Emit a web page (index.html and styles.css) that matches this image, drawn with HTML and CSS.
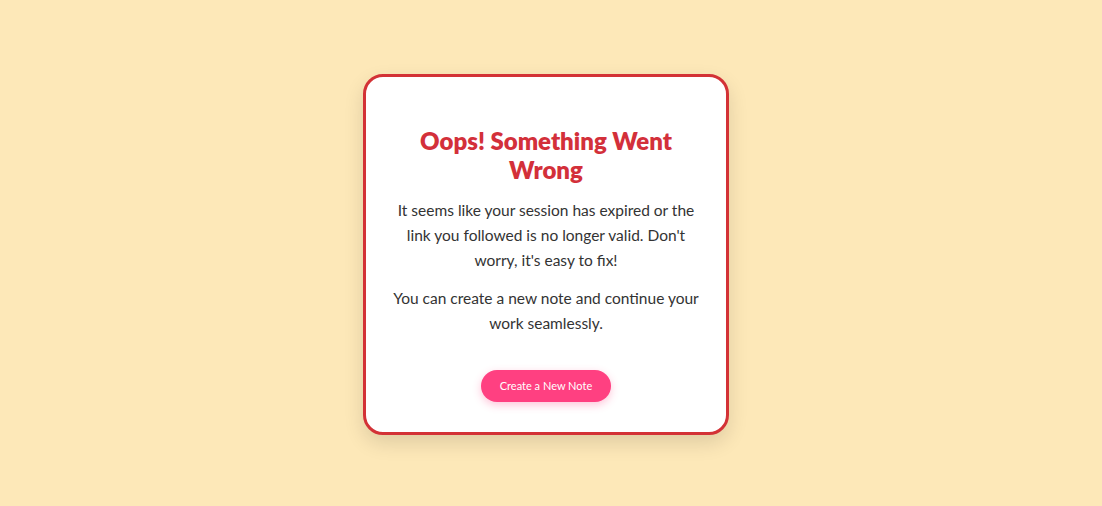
FILE: index.html
```html
<!DOCTYPE html>
<html lang="en">
<head>
<meta charset="utf-8">
<title>Oops! Something Went Wrong</title>
<link rel="stylesheet" href="styles.css">
</head>
<body>
<main class="card">
  <h1 class="title">Oops! Something Went Wrong</h1>
  <p class="text">It seems like your session has expired or the link you followed is no longer valid. Don't worry, it's easy to fix!</p>
  <p class="text">You can create a new note and continue your work seamlessly.</p>
  <button class="btn" type="button">Create a New Note</button>
</main>
</body>
</html>
```

FILE: styles.css
```css
html, body {
  margin: 0;
  padding: 0;
}
body {
  box-sizing: border-box;
  background: #fde8b8;
  min-height: 100vh;
  padding: 2px 10px 0 0;
  display: flex;
  align-items: center;
  justify-content: center;
  font-family: "Lato", "Noto Sans", sans-serif;
}
.card {
  box-sizing: border-box;
  width: 366px;
  background: #ffffff;
  border: 3px solid #d33236;
  border-radius: 20px;
  padding: 49px 23px 30px;
  text-align: center;
  box-shadow: 0 8px 20px rgba(0, 0, 0, 0.12);
  display: flex;
  flex-direction: column;
  align-items: center;
}
.title {
  margin: 0 0 14px;
  padding: 0 30px;
  font-size: 24px;
  line-height: 29px;
  font-weight: 800;
  color: #d3303a;
}
.text {
  margin: 0 0 13px;
  font-size: 15.5px;
  line-height: 25px;
  color: #333333;
}
.btn {
  margin-top: 21px;
  width: 130px;
  height: 32px;
  border: none;
  border-radius: 16px;
  background: #ff4081;
  color: #ffffff;
  font-family: inherit;
  font-size: 11px;
  box-shadow: 0 3px 8px rgba(255, 64, 129, 0.3);
  cursor: pointer;
}
```
